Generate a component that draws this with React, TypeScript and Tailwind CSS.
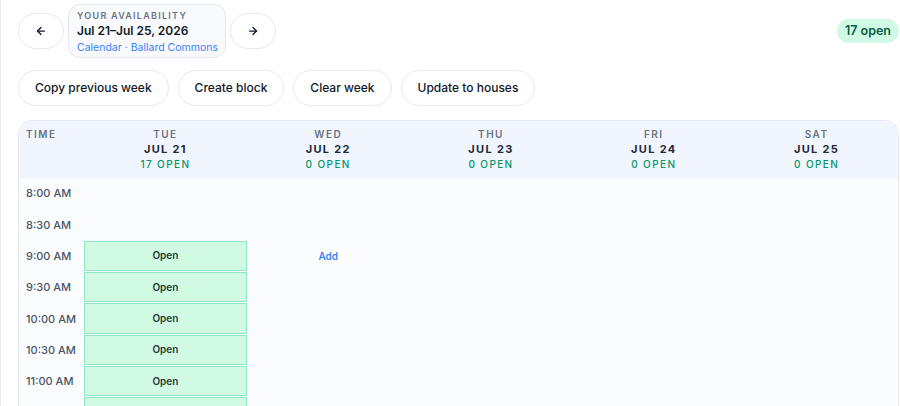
import React from "react";
import { ArrowLeft, ArrowRight } from "lucide-react";

const days = [
  { d: "TUE", date: "JUL 21", open: "17 OPEN" },
  { d: "WED", date: "JUL 22", open: "0 OPEN" },
  { d: "THU", date: "JUL 23", open: "0 OPEN" },
  { d: "FRI", date: "JUL 24", open: "0 OPEN" },
  { d: "SAT", date: "JUL 25", open: "0 OPEN" },
];

const times: string[] = [];
for (let h = 8; h <= 11; h++) {
  for (const m of ["00", "30"]) {
    const hr = h > 12 ? h - 12 : h;
    const ap = h >= 12 ? "PM" : "AM";
    times.push(`${hr}:${m} ${ap}`);
  }
}

export default function App() {
  return (
    <div
      className="h-[406px] overflow-hidden bg-white border-l border-[#ececec] pl-[17px] pr-px pt-[4px]"
      style={{ fontFamily: "Inter, 'Noto Sans', sans-serif" }}
    >
      {/* Row 1 */}
      <div className="flex items-center">
        <button className="w-[46px] h-[36px] rounded-full border border-[#e8e9ec] bg-white flex items-center justify-center text-gray-900">
          <ArrowLeft size={12} strokeWidth={2.5} />
        </button>
        <div className="ml-[4px] rounded-[12px] border border-[#e3e7ee] bg-[#f8fafd] pl-[8px] pr-[7px] pt-[5px] pb-[2px] whitespace-nowrap">
          <div className="text-[9px] leading-[11px] font-semibold tracking-[0.14em] text-gray-500">YOUR AVAILABILITY</div>
          <div className="text-[12px] leading-[18px] font-semibold text-gray-900 mt-[1px]">Jul 21–Jul 25, 2026</div>
          <div className="text-[10.5px] leading-[15px] text-[#3b82f6]">Calendar · Ballard Commons</div>
        </div>
        <button className="ml-[4px] w-[46px] h-[36px] rounded-full border border-[#e8e9ec] bg-white flex items-center justify-center text-gray-900">
          <ArrowRight size={12} strokeWidth={2.5} />
        </button>
        <div className="ml-auto rounded-full bg-[#d1fae5] text-[#065f46] text-[12.5px] font-semibold h-[24px] px-[8px] flex items-center">
          17 open
        </div>
      </div>

      {/* Row 2 */}
      <div className="flex gap-[9px] mt-[12px]">
        {["Copy previous week", "Create block", "Clear week", "Update to houses"].map((t) => (
          <button
            key={t}
            className="h-[36px] px-[16px] rounded-full border border-[#e8e9ec] bg-white text-[12px] font-medium text-gray-900 whitespace-nowrap"
          >
            {t}
          </button>
        ))}
      </div>

      {/* Calendar card */}
      <div className="mt-[14px] rounded-[14px] border border-[#e6e9f0] bg-[#fbfcfe] overflow-hidden">
        <div className="grid grid-cols-[65px_repeat(5,1fr)] bg-[#f1f5fd] h-[57px]">
          <div className="pl-[7px] pt-[6px] text-[10px] leading-[15px] font-semibold tracking-[0.15em] text-gray-500">TIME</div>
          {days.map((d) => (
            <div key={d.d} className="flex flex-col items-center pt-[6px]">
              <div className="text-[10px] leading-[15px] font-semibold tracking-[0.15em] text-gray-500">{d.d}</div>
              <div className="text-[11px] leading-[15px] font-bold tracking-[0.12em] text-gray-800">{d.date}</div>
              <div className="text-[10px] leading-[15px] font-medium tracking-[0.14em] text-[#059669]">{d.open}</div>
            </div>
          ))}
        </div>
        <div>
          {times.map((t, i) => (
            <div key={t} className="grid grid-cols-[65px_repeat(5,1fr)] h-[31.33px]">
              <div className="pl-[7px] flex items-center text-[11px] font-medium text-gray-600">{i < 7 ? t : ""}</div>
              <div className="pb-px">
                {i >= 2 && (
                  <div className="h-full border border-[#8ee6c4] bg-[#d1fae5] flex items-center justify-center text-[10px] font-semibold text-[#1f3a33]">
                    {i < 7 ? "Open" : ""}
                  </div>
                )}
              </div>
              <div className="flex items-center justify-center">
                {i === 2 && <span className="text-[10px] font-semibold text-[#3b82f6]">Add</span>}
              </div>
              <div />
              <div />
              <div />
            </div>
          ))}
        </div>
      </div>
    </div>
  );
}
